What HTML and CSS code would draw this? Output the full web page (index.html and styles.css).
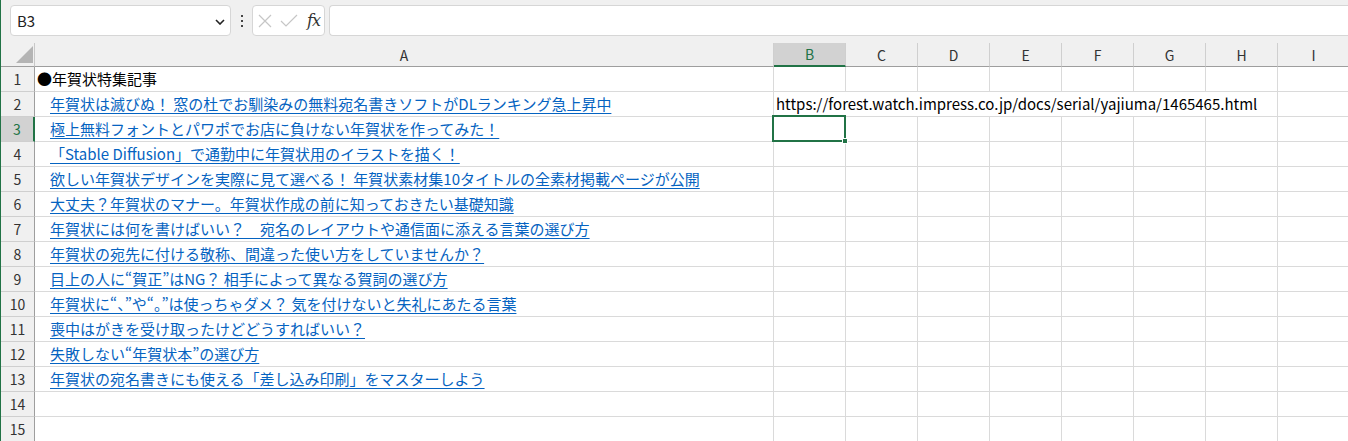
FILE: index.html
```html
<!DOCTYPE html>
<html lang="ja">
<head>
<meta charset="utf-8">
<title>Excel</title>
<link rel="stylesheet" href="styles.css">
</head>
<body>
<div class="app">
  <div class="toolbar">
    <div class="namebox">
      <span class="nb-text">B3</span>
      <svg class="chev" width="10" height="6" viewBox="0 0 10 6"><path d="M1 1 L5 5 L9 1" fill="none" stroke="#222" stroke-width="1.6"/></svg>
    </div>
    <svg class="dots" width="4" height="14" viewBox="0 0 4 14"><rect x="1" y="1" width="2" height="2" fill="#444"/><rect x="1" y="6" width="2" height="2" fill="#444"/><rect x="1" y="11" width="2" height="2" fill="#444"/></svg>
    <div class="fxgroup">
      <svg class="ic-x" width="14" height="14" viewBox="0 0 14 14"><path d="M1 1 L13 13 M13 1 L1 13" stroke="#c6c6c6" stroke-width="1.2" fill="none"/></svg>
      <svg class="ic-ok" width="18" height="14" viewBox="0 0 18 14"><path d="M1 7 L6 12 L17 1" stroke="#c6c6c6" stroke-width="1.2" fill="none"/></svg>
      <span class="fx">fx</span>
    </div>
    <div class="formula"></div>
  </div>

  <div class="sheet">
    <div class="corner"><svg width="17" height="17" viewBox="0 0 17 17"><path d="M17 0 L17 17 L0 17 Z" fill="#b4b4b4"/></svg></div>
    <div class="ch">A</div>
    <div class="ch sel">B</div>
    <div class="ch">C</div>
    <div class="ch">D</div>
    <div class="ch">E</div>
    <div class="ch">F</div>
    <div class="ch">G</div>
    <div class="ch">H</div>
    <div class="ch">I</div>

    <div class="rh">1</div>
    <div class="c a t1">●年賀状特集記事</div>
    <div class="c"></div><div class="c"></div><div class="c"></div><div class="c"></div><div class="c"></div><div class="c"></div><div class="c"></div><div class="c"></div>

    <div class="rh">2</div>
    <div class="c a"><a class="lnk" href="#">年賀状は滅びぬ！ 窓の杜でお馴染みの無料宛名書きソフトがDLランキング急上昇中</a></div>
    <div class="c url">https://forest.watch.impress.co.jp/docs/serial/yajiuma/1465465.html</div>
    <div class="c"></div>

    <div class="rh rsel">3</div>
    <div class="c a"><a class="lnk" href="#">極上無料フォントとパワポでお店に負けない年賀状を作ってみた！</a></div>
    <div class="c active"><span class="selbox"><span class="handle"></span></span></div>
    <div class="c"></div><div class="c"></div><div class="c"></div><div class="c"></div><div class="c"></div><div class="c"></div><div class="c"></div>

    <div class="rh">4</div>
    <div class="c a"><a class="lnk" href="#">「Stable Diffusion」で通勤中に年賀状用のイラストを描く！</a></div>
    <div class="c"></div><div class="c"></div><div class="c"></div><div class="c"></div><div class="c"></div><div class="c"></div><div class="c"></div><div class="c"></div>

    <div class="rh">5</div>
    <div class="c a"><a class="lnk" href="#">欲しい年賀状デザインを実際に見て選べる！ 年賀状素材集10タイトルの全素材掲載ページが公開</a></div>
    <div class="c"></div><div class="c"></div><div class="c"></div><div class="c"></div><div class="c"></div><div class="c"></div><div class="c"></div><div class="c"></div>

    <div class="rh">6</div>
    <div class="c a"><a class="lnk" href="#">大丈夫？年賀状のマナー。年賀状作成の前に知っておきたい基礎知識</a></div>
    <div class="c"></div><div class="c"></div><div class="c"></div><div class="c"></div><div class="c"></div><div class="c"></div><div class="c"></div><div class="c"></div>

    <div class="rh">7</div>
    <div class="c a"><a class="lnk" href="#">年賀状には何を書けばいい？　宛名のレイアウトや通信面に添える言葉の選び方</a></div>
    <div class="c"></div><div class="c"></div><div class="c"></div><div class="c"></div><div class="c"></div><div class="c"></div><div class="c"></div><div class="c"></div>

    <div class="rh">8</div>
    <div class="c a"><a class="lnk" href="#">年賀状の宛先に付ける敬称、間違った使い方をしていませんか？</a></div>
    <div class="c"></div><div class="c"></div><div class="c"></div><div class="c"></div><div class="c"></div><div class="c"></div><div class="c"></div><div class="c"></div>

    <div class="rh">9</div>
    <div class="c a"><a class="lnk" href="#">目上の人に“賀正”はNG？ 相手によって異なる賀詞の選び方</a></div>
    <div class="c"></div><div class="c"></div><div class="c"></div><div class="c"></div><div class="c"></div><div class="c"></div><div class="c"></div><div class="c"></div>

    <div class="rh">10</div>
    <div class="c a"><a class="lnk" href="#">年賀状に“、”や“。”は使っちゃダメ？ 気を付けないと失礼にあたる言葉</a></div>
    <div class="c"></div><div class="c"></div><div class="c"></div><div class="c"></div><div class="c"></div><div class="c"></div><div class="c"></div><div class="c"></div>

    <div class="rh">11</div>
    <div class="c a"><a class="lnk" href="#">喪中はがきを受け取ったけどどうすればいい？</a></div>
    <div class="c"></div><div class="c"></div><div class="c"></div><div class="c"></div><div class="c"></div><div class="c"></div><div class="c"></div><div class="c"></div>

    <div class="rh">12</div>
    <div class="c a"><a class="lnk" href="#">失敗しない“年賀状本”の選び方</a></div>
    <div class="c"></div><div class="c"></div><div class="c"></div><div class="c"></div><div class="c"></div><div class="c"></div><div class="c"></div><div class="c"></div>

    <div class="rh">13</div>
    <div class="c a"><a class="lnk" href="#">年賀状の宛名書きにも使える「差し込み印刷」をマスターしよう</a></div>
    <div class="c"></div><div class="c"></div><div class="c"></div><div class="c"></div><div class="c"></div><div class="c"></div><div class="c"></div><div class="c"></div>

    <div class="rh">14</div>
    <div class="c a"></div>
    <div class="c"></div><div class="c"></div><div class="c"></div><div class="c"></div><div class="c"></div><div class="c"></div><div class="c"></div><div class="c"></div>

    <div class="rh">15</div>
    <div class="c a"></div>
    <div class="c"></div><div class="c"></div><div class="c"></div><div class="c"></div><div class="c"></div><div class="c"></div><div class="c"></div><div class="c"></div>
  </div>
</div>
</body>
</html>
```

FILE: styles.css
```css
* { box-sizing: border-box; }
html, body { margin: 0; padding: 0; }
body {
  width: 1348px;
  height: 441px;
  overflow: hidden;
  background: #ffffff;
  font-family: "Noto Sans CJK JP", "Noto Sans", sans-serif;
}
.app {
  height: 441px;
  border-left: 1px solid #217346;
  overflow: hidden;
}
.toolbar {
  height: 43px;
  background: #f0f0f0;
  display: flex;
  align-items: flex-start;
  padding-top: 5px;
  padding-left: 9px;
}
.namebox {
  width: 221px;
  height: 31px;
  background: #fff;
  border: 1px solid #d6d6d6;
  border-radius: 4px;
  display: flex;
  align-items: center;
  justify-content: space-between;
  padding: 0 5px 0 6px;
}
.nb-text {
  font-family: "Noto Sans CJK JP", "Noto Sans", sans-serif;
  font-size: 15px;
  color: #222;
}
.chev { margin-top: 2px; }
.dots { margin: 9px 8px 0 9px; }
.fxgroup {
  width: 73px;
  height: 31px;
  background: #fff;
  border: 1px solid #d6d6d6;
  border-radius: 4px;
  display: flex;
  align-items: center;
  padding-left: 5px;
  gap: 8px;
}
.fx {
  font-family: "DejaVu Serif", "Liberation Serif", serif;
  font-style: italic;
  font-size: 16px;
  color: #333;
  letter-spacing: -1px;
  margin-left: 1px;
}
.formula {
  flex: 1;
  margin-left: 4px;
  height: 31px;
  background: #fff;
  border: 1px solid #d6d6d6;
  border-right: none;
  border-radius: 4px 0 0 4px;
}

.sheet {
  display: grid;
  grid-template-columns: 34px 739px repeat(8, 72px);
  grid-template-rows: 24px;
  grid-auto-rows: 25px;
}
.corner {
  background: #f0f0f0;
  border-right: 1px solid #c8c8c8;
  border-bottom: 1px solid #9e9e9e;
  display: flex;
  align-items: flex-end;
  justify-content: flex-end;
  padding: 0 1px 3px 0;
}
.ch {
  background: #f0f0f0;
  border-right: 1px solid #cfcfcf;
  border-bottom: 1px solid #9e9e9e;
  font-size: 14px;
  color: #333;
  display: flex;
  align-items: center;
  justify-content: center;
}
.ch.sel {
  background: #d2d2d2;
  color: #217346;
  border-bottom: 2px solid #217346;
}
.rh {
  background: #f0f0f0;
  border-right: 1px solid #9e9e9e;
  border-bottom: 1px solid #cfcfcf;
  font-size: 14px;
  color: #333;
  display: flex;
  align-items: center;
  justify-content: center;
}
.rh.rsel {
  background: #d2d2d2;
  color: #217346;
  border-right: 2px solid #217346;
}
.c {
  border-right: 1px solid #dadada;
  border-bottom: 1px solid #dadada;
  font-size: 15px;
  line-height: 23px;
  white-space: nowrap;
  color: #000;
}
.a { padding-left: 15px; }
.a.t1 { padding-left: 2px; }
.lnk {
  color: #0563c1;
  text-decoration: underline;
  text-underline-offset: 3px;
}
.url {
  grid-column: span 7;
  padding-left: 2px;
  overflow: visible;
}
.active { position: relative; }
.selbox {
  position: absolute;
  left: -2px;
  top: -2px;
  right: -1px;
  bottom: -1px;
  border: 2px solid #217346;
}
.handle {
  position: absolute;
  right: -4px;
  bottom: -4px;
  width: 6px;
  height: 6px;
  background: #217346;
  border: 1px solid #fff;
}
```
